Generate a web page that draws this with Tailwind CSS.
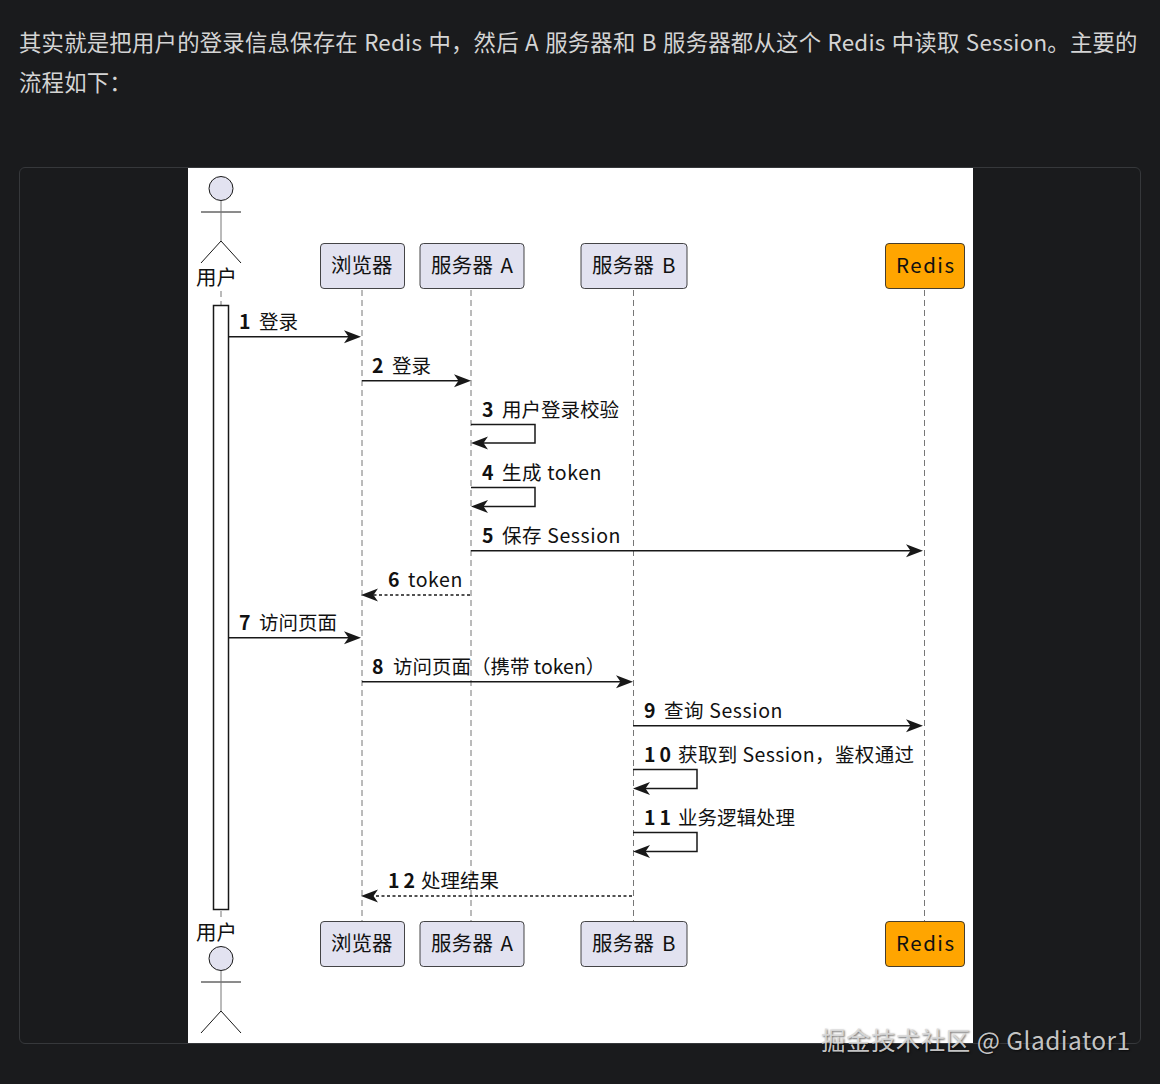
<!DOCTYPE html>
<html lang="zh"><head><meta charset="utf-8"><script src="https://cdn.jsdelivr.net/npm/@tailwindcss/browser@4"></script></head>
<body class="bg-[#1a1b1d] font-['Noto_Sans_CJK_SC','Noto_Sans',sans-serif]">
<main class="relative w-[1160px] h-[1084px] overflow-hidden px-[19px] pt-[21px]">
<p class="text-[22.4px] leading-[40px] text-[#d4d4d4] w-[1122px] tracking-[0.2px] [word-spacing:1.1px]">其实就是把用户的登录信息保存在 Redis 中，然后 A 服务器和 B 服务器都从这个 Redis 中读取 Session。主要的流程如下：</p>
<figure class="mt-[66px] w-[1122px] h-[877px] border border-[#36383b] rounded-[6px] bg-[#1a1b1d] flex overflow-hidden">
<svg width="785" height="875" viewBox="188 168 785 875" class="bg-white shrink-0 ml-[168px] block font-['Noto_Sans_CJK_SC','Noto_Sans',sans-serif] text-[19.5px]">
<g stroke="#777" stroke-width="1" stroke-dasharray="6 4" fill="none">
<path d="M221 291V305M221 911V921M362 290V921M471 290V921M633.500 290V921M924.500 290V921"/>
</g>
<rect x="213.500" y="305.500" width="15" height="604" fill="#fff" stroke="#181818" stroke-width="1.500"/>
<g fill="#e2e2f0" stroke="#181818" stroke-width="0.800">
<rect x="320.500" y="243.500" width="84" height="45" rx="3.500"/><rect x="420" y="243.500" width="104" height="45" rx="3.500"/><rect x="581" y="243.500" width="106" height="45" rx="3.500"/>
<rect x="885.500" y="243.500" width="79" height="45" rx="3.500" fill="#ffa500"/>
<rect x="320.500" y="921.500" width="84" height="45" rx="3.500"/><rect x="420" y="921.500" width="104" height="45" rx="3.500"/><rect x="581" y="921.500" width="106" height="45" rx="3.500"/>
<rect x="885.500" y="921.500" width="79" height="45" rx="3.500" fill="#ffa500"/>
</g>
<g fill="none" stroke="#181818" stroke-width="1">
<circle cx="221" cy="188.500" r="12" fill="#e2e2f0"/><path d="M201 212H241M201 263L221 241L241 263"/>
<circle cx="221" cy="958.500" r="12" fill="#e2e2f0"/><path d="M201 982H241M201 1033L221 1011L241 1033"/>
<path d="M221 201V241M221 971V1011" stroke="#777"/>
</g>
<g stroke="#181818" stroke-width="1.500" fill="none">
<path d="M229 336.700H350M362 380.700H460M471 424.500H535V443H480M471 487.500H535V506.500H480M471 550.700H912M229 637.700H350M362 681.700H622M633 725.700H912M633 769.500H697V788.500H642M633 832.500H697V851.500H642"/>
<path stroke-dasharray="3 2.500" d="M470 595H372M632 896H372"/>
</g>
<g fill="#181818">
<path d="M361 336.700L344 330.200L348.500 336.700L344 343.200ZM471 380.700L454 374.200L458.500 380.700L454 387.200ZM923 550.700L906 544.200L910.500 550.700L906 557.200ZM361 637.700L344 631.200L348.500 637.700L344 644.200ZM633 681.700L616 675.200L620.500 681.700L616 688.200ZM923 725.700L906 719.200L910.500 725.700L906 732.200Z"/>
<path d="M471 443L488 436.500L483.500 443L488 449.500ZM471 506.500L488 500L483.500 506.500L488 513ZM361 595L378 588.500L373.500 595L378 601.500ZM633 788.500L650 782L645.500 788.500L650 795ZM633 851.500L650 845L645.500 851.500L650 858ZM361 896L378 889.500L373.500 896L378 902.500Z"/>
</g>
<g fill="#111" class="text-[20.500px]">
<text x="196" y="285" class="text-[20.500px]">用户</text><text x="196" y="940" class="text-[20.500px]">用户</text>
<text x="331" y="273">浏览器</text><text x="431" y="273" class="[word-spacing:2.500px] tracking-[0.2px]">服务器 A</text><text x="592" y="273" class="[word-spacing:3px] tracking-[0.2px]">服务器 B</text>
<text x="331" y="951">浏览器</text><text x="431" y="951" class="[word-spacing:2.500px] tracking-[0.2px]">服务器 A</text><text x="592" y="951" class="[word-spacing:3px] tracking-[0.2px]">服务器 B</text>
<text x="896" y="273" class="tracking-[1.500px]">Redis</text><text x="896" y="951" class="tracking-[1.500px]">Redis</text>
</g>
<g fill="#111">
<g class="font-bold"><text x="239" y="329">1</text><text x="372" y="373">2</text><text x="482" y="417">3</text><text x="482" y="480">4</text><text x="482" y="543">5</text><text x="388" y="587">6</text><text x="239" y="630">7</text><text x="372" y="674">8</text><text x="644" y="718">9</text><text x="644" y="762" class="tracking-[4px]">10</text><text x="644" y="825" class="tracking-[4px]">11</text><text x="388" y="888" class="tracking-[4px]">12</text></g>
<g class="tracking-[0.600px]">
<text x="259" y="329" class="tracking-normal">登录</text><text x="392" y="373" class="tracking-normal">登录</text><text x="502" y="417" class="tracking-normal">用户登录校验</text>
<text x="502" y="480">生成 token</text><text x="502" y="543">保存 Session</text><text x="408" y="587">token</text>
<text x="259" y="630" class="tracking-normal">访问页面</text><text x="393" y="674" class="tracking-normal">访问页面（携带 token）</text>
<text x="664" y="718">查询 Session</text><text x="678" y="762" class="tracking-[0.400px]">获取到 Session，鉴权通过</text>
<text x="678" y="825" class="tracking-normal">业务逻辑处理</text><text x="421" y="888" class="tracking-normal">处理结果</text>
</g>
</g>
</svg>
</figure>
<div class="absolute left-[821px] top-[1022px] text-[24.500px] leading-[36px] text-[#dcdcdc]/90 whitespace-nowrap tracking-[0.45px] [text-shadow:1px_1px_2px_rgba(0,0,0,0.6)]">掘金技术社区 @ Gladiator1</div>
</main>
</body></html>
